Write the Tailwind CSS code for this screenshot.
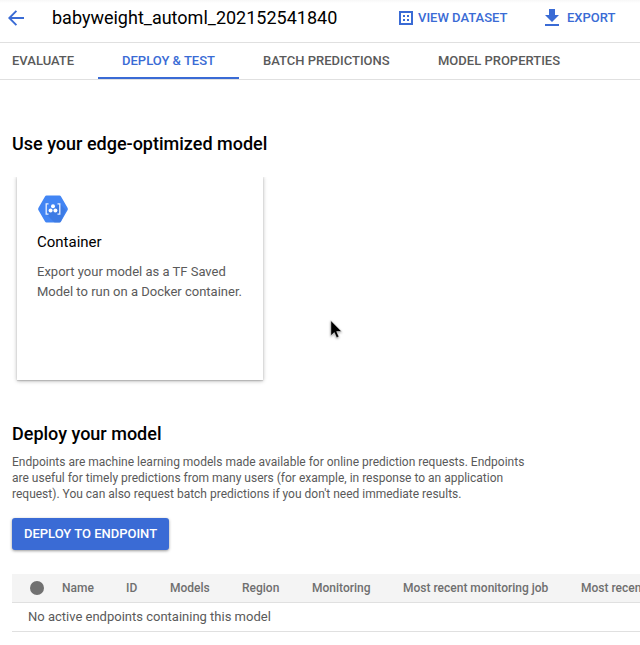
<!DOCTYPE html>
<html lang="en">
<head>
<meta charset="utf-8">
<title>babyweight_automl_202152541840</title>
<script src="https://cdn.jsdelivr.net/npm/@tailwindcss/browser@4"></script>
</head>
<body class="relative w-[640px] h-[645px] overflow-hidden bg-white font-['Roboto',sans-serif] text-[#5a5a5a]">
<header class="flex items-center h-[43px] pb-[7px] border-b border-[#e0e0e0] bg-linear-to-b from-[#f7f7f7] to-white to-[3px] whitespace-nowrap">
  <svg class="ml-2 w-4 h-4 shrink-0" viewBox="0 0 16 16" fill="none" stroke="#3a6bd5" stroke-width="1.9"><path d="M16 8H1.5M8.4 .9 1.3 8l7.1 7.1"/></svg>
  <h1 class="ml-7 w-[347px] shrink-0 text-[18px] leading-6 text-black">babyweight_automl_202152541840</h1>
  <button class="flex items-center w-[146px] shrink-0 text-[13px] font-medium text-[#3a6bd5]">
    <svg class="w-[14px] h-[14px] mr-[5px]" viewBox="0 0 14 14" fill="#3a6bd5"><path fill-rule="evenodd" d="M0 0h14v14H0zM2 2v10h10V2z"/><path d="M4 4h2v2H4zM8 4h2v2H8zM4 8h2v2H4zM8 8h2v2H8z"/></svg>VIEW DATASET
  </button>
  <button class="flex items-center text-[13px] font-medium text-[#3a6bd5]">
    <svg class="w-[14px] h-[17px] mr-2" viewBox="0 0 14 17" fill="#3a6bd5"><path d="M4 0h6v6h4l-7 7-7-7h4zM0 15h14v2H0z"/></svg>EXPORT
  </button>
</header>
<nav class="flex h-[37px] border-b border-[#e0e0e0] text-[13px] leading-[35px] font-medium whitespace-nowrap">
  <a class="pl-3 w-[98px] shrink-0">EVALUATE</a>
  <a class="w-[141px] h-9 shrink-0 text-center text-[#3a6bd5] border-b-2 border-[#3a6bd5]">DEPLOY &amp; TEST</a>
  <a class="pl-6 w-[175px] shrink-0">BATCH PREDICTIONS</a>
  <a class="pl-6 shrink-0">MODEL PROPERTIES</a>
</nav>
<main class="pl-3">
  <h2 class="pt-[52px] text-[18px] leading-6 font-medium text-black">Use your edge-optimized model</h2>
  <section class="mt-5 ml-[5px] w-[246px] h-[204px] pl-5 pt-[19px] bg-white shadow-[0_1px_4px_rgba(0,0,0,0.3),0_1px_1px_rgba(0,0,0,0.12)] [clip-path:inset(1px_-6px_-6px_-6px)]">
    <svg class="block ml-px w-[30px] h-[28px]" viewBox="0 0 30 28">
      <path fill="#4285f4" d="M8.5 .5h13q1 0 1.5.9l6.5 11.3q.7 1.3 0 2.6L23 26.6q-.5.9-1.5.9h-13q-1 0-1.5-.9L.5 15.3q-.7-1.3 0-2.6L7 1.4q.5-.9 1.5-.9z"/>
      <path fill="#3b74d8" d="m22 9 5.8 5.8L23 26.6q-.5.9-1.5.9h-5L8 19z" opacity=".6"/>
      <g fill="none" stroke="#e8f0fe" stroke-width="1.3"><path d="M10.5 8.8H8.2v10.4h2.3M19.5 8.8h2.3v10.4h-2.3"/></g>
      <g fill="#fff"><circle cx="15" cy="11.2" r="2"/><circle cx="12.6" cy="15.5" r="2"/><circle cx="17.4" cy="15.5" r="2"/></g>
    </svg>
    <h3 class="mt-[7px] text-[15px] leading-6 text-black">Container</h3>
    <p class="mt-2 text-[13px] leading-5">Export your model as a TF Saved<br>Model to run on a Docker container.</p>
  </section>
  <h2 class="mt-[42px] text-[18px] leading-6 font-medium text-black">Deploy your model</h2>
  <p class="mt-2 text-[12px] leading-4 whitespace-nowrap">Endpoints are machine learning models made available for online prediction requests. Endpoints<br>are useful for timely predictions from many users (for example, in response to an application<br>request). You can also request batch predictions if you don't need immediate results.</p>
  <button class="block mt-4 w-[157px] h-8 rounded-[3px] bg-[#3a6bd5] text-white text-[13px] font-medium whitespace-nowrap shadow-[0_1px_3px_rgba(0,0,0,0.4)]">DEPLOY TO ENDPOINT</button>
  <section class="mt-6 w-[628px] overflow-hidden">
    <div class="flex items-center h-[29px] bg-[#f4f4f4] border-b border-[#e0e0e0] text-[12px] font-medium text-[#6f6f6f] whitespace-nowrap">
      <i class="ml-[18px] mr-[18px] w-[14px] h-[14px] rounded-full bg-[#717171] shrink-0"></i>
      <span class="w-16 shrink-0">Name</span>
      <span class="w-11 shrink-0">ID</span>
      <span class="w-[72px] shrink-0">Models</span>
      <span class="w-[70px] shrink-0">Region</span>
      <span class="w-[91px] shrink-0">Monitoring</span>
      <span class="w-[178px] shrink-0">Most recent monitoring job</span>
      <span class="shrink-0">Most recent</span>
    </div>
    <div class="h-[29px] pl-4 border-b border-[#e0e0e0] text-[13px] leading-7">No active endpoints containing this model</div>
  </section>
</main>
<svg class="absolute left-[328px] top-[318px] w-[18px] h-[24px] drop-shadow-[0_1px_1px_rgba(0,0,0,0.35)]" viewBox="0 0 18 24"><path fill="#000" stroke="#fff" stroke-width=".5" d="M2.8 2.5v15.3l3.5-3.2 2.3 5.1 2.3-1-2.2-5.1h5z"/></svg>
</body>
</html>
